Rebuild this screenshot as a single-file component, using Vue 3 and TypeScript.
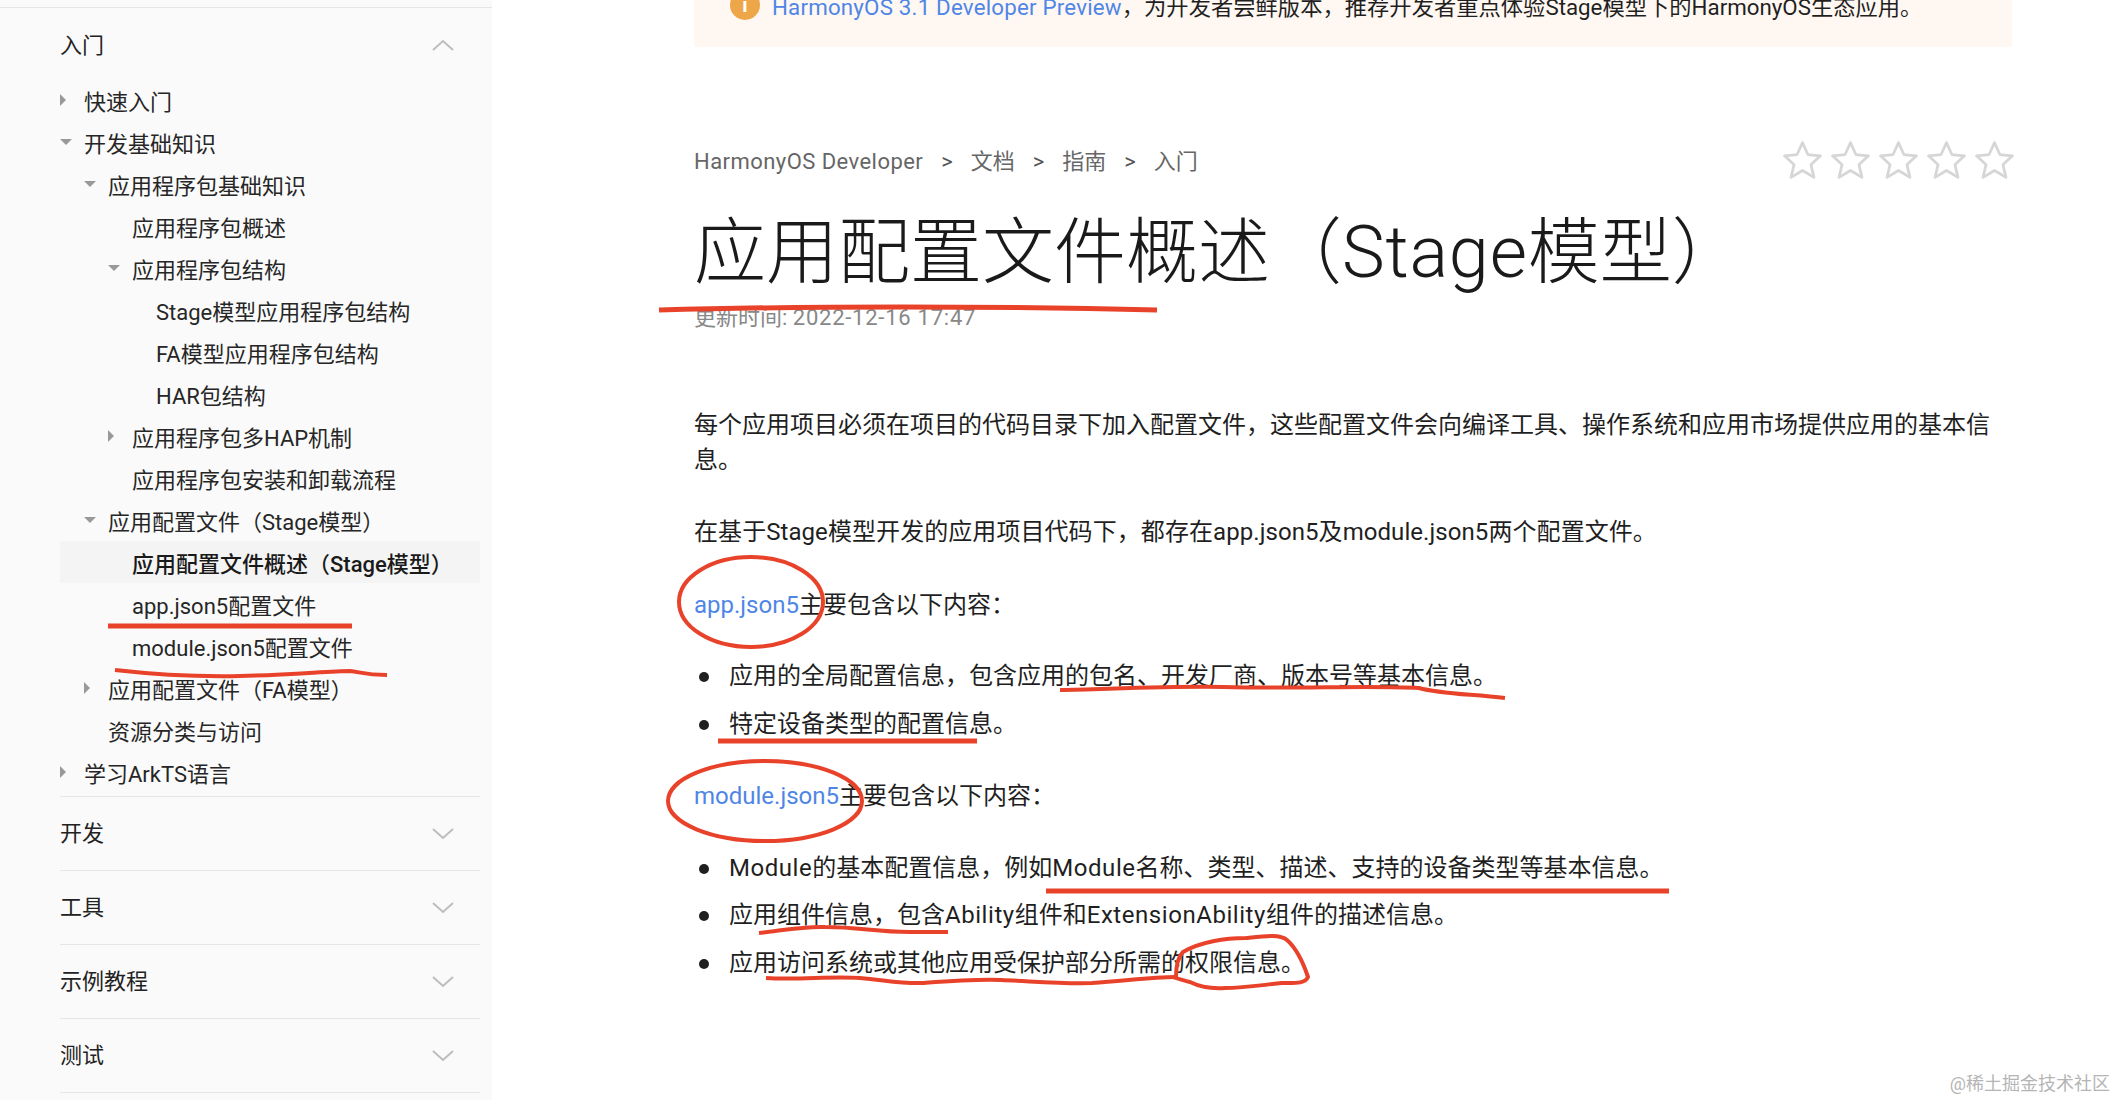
<script setup lang="ts">
interface TreeItem {
  label: string
  level: number
  caret?: 'open' | 'closed'
  active?: boolean
}

const tree: TreeItem[] = [
  { label: '快速入门', level: 1, caret: 'closed' },
  { label: '开发基础知识', level: 1, caret: 'open' },
  { label: '应用程序包基础知识', level: 2, caret: 'open' },
  { label: '应用程序包概述', level: 3 },
  { label: '应用程序包结构', level: 3, caret: 'open' },
  { label: 'Stage模型应用程序包结构', level: 4 },
  { label: 'FA模型应用程序包结构', level: 4 },
  { label: 'HAR包结构', level: 4 },
  { label: '应用程序包多HAP机制', level: 3, caret: 'closed' },
  { label: '应用程序包安装和卸载流程', level: 3 },
  { label: '应用配置文件（Stage模型）', level: 2, caret: 'open' },
  { label: '应用配置文件概述（Stage模型）', level: 3, active: true },
  { label: 'app.json5配置文件', level: 3 },
  { label: 'module.json5配置文件', level: 3 },
  { label: '应用配置文件（FA模型）', level: 2, caret: 'closed' },
  { label: '资源分类与访问', level: 2 },
  { label: '学习ArkTS语言', level: 1, caret: 'closed' },
]

const sections = ['开发', '工具', '示例教程', '测试']
const crumbs = ['文档', '指南', '入门']
const stars = [1, 2, 3, 4, 5]
const appItems = ['应用的全局配置信息，包含应用的包名、开发厂商、版本号等基本信息。', '特定设备类型的配置信息。']
const moduleItems = [
  'Module的基本配置信息，例如Module名称、类型、描述、支持的设备类型等基本信息。',
  '应用组件信息，包含Ability组件和ExtensionAbility组件的描述信息。',
  '应用访问系统或其他应用受保护部分所需的权限信息。',
]
const indent = (level: number) => ({ paddingLeft: `${(level - 1) * 24}px` })
const segments = (text: string) => text.split(/([A-Za-z]+)/).filter(Boolean)
const isLatin = (text: string) => /^[A-Za-z]/.test(text)
</script>

<template>
  <div class="page">
    <aside class="sidebar">
      <div class="section-head first">
        <span>入门</span>
        <svg class="chev" width="22" height="12" viewBox="0 0 22 12"><path d="M1 11 L11 2 L21 11" /></svg>
      </div>
      <ul class="tree">
        <li v-for="item in tree" :key="item.label" class="row" :class="{ active: item.active }" :style="indent(item.level)">
          <span class="caret-box">
            <i v-if="item.caret" :class="item.caret === 'open' ? 'caret-open' : 'caret-closed'"></i>
          </span>
          <span>{{ item.label }}</span>
        </li>
      </ul>
      <div v-for="name in sections" :key="name" class="section-head">
        <span>{{ name }}</span>
        <svg class="chev" width="22" height="12" viewBox="0 0 22 12"><path d="M1 1 L11 10 L21 1" /></svg>
      </div>
    </aside>

    <main class="content">
      <div class="banner">
        <span class="info-icon">i</span>
        <p class="banner-text"><a>HarmonyOS 3.1 Developer Preview</a>，为开发者尝鲜版本，推荐开发者重点体验Stage模型下的HarmonyOS生态应用。</p>
      </div>

      <div class="crumb-row">
        <nav class="crumbs">
          <span class="crumb-root">HarmonyOS Developer</span>
          <template v-for="c in crumbs" :key="c">
            <span class="sep">&gt;</span>
            <span>{{ c }}</span>
          </template>
        </nav>
        <div class="stars">
          <svg v-for="s in stars" :key="s" width="39" height="38" viewBox="0 0 37 36">
            <path d="M18.5 1.5 L23.6 12.8 L35.5 14 L26.5 22.4 L29.4 34.5 L18.5 28 L7.6 34.5 L10.5 22.4 L1.5 14 L13.4 12.8 Z" />
          </svg>
        </div>
      </div>

      <h1 class="title">应用配置文件概述（<span class="title-latin">Stage</span>模型）</h1>
      <div class="updated">更新时间: <span class="updated-time">2022-12-16 17:47</span></div>

      <p class="para first-para">每个应用项目必须在项目的代码目录下加入配置文件，这些配置文件会向编译工具、操作系统和应用市场提供应用的基本信息。</p>
      <p class="para second-para">在基于Stage模型开发的应用项目代码下，都存在app.json5及module.json5两个配置文件。</p>
      <p class="para lead"><a>app.json5</a>主要包含以下内容：</p>
      <ul class="bullets app-list">
        <li v-for="t in appItems" :key="t">{{ t }}</li>
      </ul>
      <p class="para lead lead-module"><a>module.json5</a>主要包含以下内容：</p>
      <ul class="bullets">
        <li v-for="t in moduleItems" :key="t">
          <span v-for="(seg, i) in segments(t)" :key="i" :class="{ latin: isLatin(seg) }">{{ seg }}</span>
        </li>
      </ul>
    </main>

    <svg class="marks" width="2116" height="1100" viewBox="0 0 2116 1100" fill="none">
      <path d="M659 310 C800 306 1000 306 1157 310" stroke-width="5" />
      <path d="M108 626 L352 626" stroke-width="5" />
      <path d="M115 670 C150 674 190 677 240 676 C290 675 330 671 350 671 C360 672 365 675 387 675" stroke-width="4" />
      <ellipse cx="751" cy="602" rx="72" ry="45" stroke-width="4" />
      <path d="M1060 690 C1110 689 1170 686 1224 687 C1300 689 1370 685 1419 688 C1440 694 1470 694 1505 698" stroke-width="4" />
      <path d="M718 741 L977 741" stroke-width="5" />
      <ellipse cx="765" cy="801" rx="97" ry="40" stroke-width="4" />
      <path d="M1046 891 L1669 891" stroke-width="5" />
      <path d="M759 933 C785 930 805 926 825 927 C860 927 875 932 910 932 L948 932" stroke-width="4" />
      <path d="M766 978 C800 980 830 976 860 978 C885 980 900 984 924 983 C950 981 975 979 1001 980 C1030 981 1060 984 1092 983 C1125 981 1150 977 1176 977" stroke-width="4" />
      <path d="M1176 977 C1176 965 1178 957 1183 952 C1200 942 1225 938 1246 938 C1265 936 1280 934 1287 940 C1296 948 1303 962 1308 977 C1305 984 1295 983 1282 983 C1262 985 1245 988 1225 988 C1210 989 1198 986 1190 982 C1183 980 1178 979 1173 977" stroke-width="4" />
    </svg>

    <div class="watermark">@稀土掘金技术社区</div>
  </div>
</template>

<style scoped>
.page {
  position: relative;
  display: flex;
  width: 2116px;
  height: 1100px;
  overflow: hidden;
  background: #fff;
  color: #1f1f1f;
  font-family: Roboto, "Noto Sans CJK SC", sans-serif;
}
.sidebar {
  width: 492px;
  flex: none;
  box-sizing: border-box;
  padding: 7px 12px 0 60px;
  background: #fafafa;
}
.sidebar::before {
  content: "";
  display: block;
  height: 1px;
  margin: 0 -12px 0 -60px;
  background: #e6e6e6;
}
.section-head {
  display: flex;
  align-items: center;
  justify-content: space-between;
  height: 73px;
  box-sizing: content-box;
  border-bottom: 1px solid #e6e6e6;
  font-size: 22px;
  color: #222;
}
.section-head span {
  margin-bottom: 6px;
}
.section-head.first {
  height: 71px;
  border-bottom: 0;
}
.section-head.first span {
  margin-bottom: 2px;
}
.section-head.first .chev {
  margin-top: 2px;
}
.chev {
  margin-right: 26px;
  fill: none;
  stroke: #bdbdbd;
  stroke-width: 2;
}
.tree {
  list-style: none;
  margin: 0;
  padding: 0 0 3px;
  border-bottom: 1px solid #e6e6e6;
}
.row {
  display: flex;
  align-items: center;
  height: 42px;
  font-size: 22px;
  color: #262626;
  white-space: nowrap;
}
.row.active {
  font-weight: 500;
  color: #1a1a1a;
  background: #f4f4f4;
}
.caret-box {
  display: flex;
  align-items: center;
  width: 24px;
  flex: none;
}
.caret-open {
  width: 0;
  height: 0;
  border-left: 6px solid transparent;
  border-right: 6px solid transparent;
  border-top: 6px solid #999;
}
.caret-closed {
  width: 0;
  height: 0;
  border-top: 6px solid transparent;
  border-bottom: 6px solid transparent;
  border-left: 6px solid #999;
}
.content {
  flex: 1;
  min-width: 0;
  padding: 0 104px 0 202px;
  margin-top: -20px;
}
.banner {
  display: flex;
  align-items: flex-start;
  height: 67px;
  box-sizing: border-box;
  padding: 10px 0 0 36px;
  background: #fff8f2;
}
.info-icon {
  display: flex;
  align-items: center;
  justify-content: center;
  width: 30px;
  height: 30px;
  flex: none;
  margin-right: 12px;
  border-radius: 50%;
  background: #eea748;
  color: #fff;
  font-size: 20px;
  font-weight: 700;
}
.banner-text {
  margin: 0;
  font-size: 22.3px;
  line-height: 34px;
  white-space: nowrap;
}
.banner-text a {
  letter-spacing: 0.2px;
}
a {
  color: #4f86e6;
}
.crumb-row {
  display: flex;
  align-items: center;
  justify-content: space-between;
  height: 36px;
  margin-top: 95px;
}
.crumbs {
  display: flex;
  align-items: baseline;
  gap: 18px;
  margin-top: -2px;
  font-size: 22px;
  color: #666;
}
.crumb-root {
  letter-spacing: 0.45px;
}
.sep {
  color: #555;
}
.stars {
  display: flex;
  gap: 9px;
  margin-right: -2px;
}
.stars path {
  fill: #fff;
  stroke: #d6d6d6;
  stroke-width: 2.6;
  stroke-linejoin: round;
}
.title {
  margin: 27px 0 0;
  font-size: 72px;
  line-height: 96px;
  font-weight: 300;
  color: #1a1a1a;
  white-space: nowrap;
}
.title-latin {
  letter-spacing: 0.8px;
}
.updated {
  margin-top: 2px;
  font-size: 22px;
  line-height: 30px;
  color: #888;
}
.updated-time {
  letter-spacing: 0.75px;
}
.para {
  margin: 0;
  font-size: 24px;
  line-height: 35px;
}
.first-para {
  margin-top: 75px;
}
.second-para {
  margin-top: 37px;
  letter-spacing: 0.07px;
}
.lead {
  margin-top: 38px;
}
.lead-module {
  margin-top: 37px;
}
.bullets {
  list-style: none;
  margin: 37px 0 0;
  padding: 0;
  display: flex;
  flex-direction: column;
  gap: 12.5px;
}
.app-list {
  margin-top: 36px;
}
.bullets li {
  position: relative;
  padding-left: 35px;
  font-size: 24px;
  line-height: 35px;
}
.bullets li::before {
  content: "";
  position: absolute;
  left: 5px;
  top: 13px;
  width: 10px;
  height: 10px;
  border-radius: 50%;
  background: #1f1f1f;
}
.latin {
  letter-spacing: 0.55px;
}
.marks {
  position: absolute;
  left: 0;
  top: 0;
  pointer-events: none;
}
.marks path,
.marks ellipse {
  stroke: #e8432a;
}
.watermark {
  position: absolute;
  right: 6px;
  bottom: 5px;
  font-size: 18px;
  color: #b5b5b5;
}
</style>
